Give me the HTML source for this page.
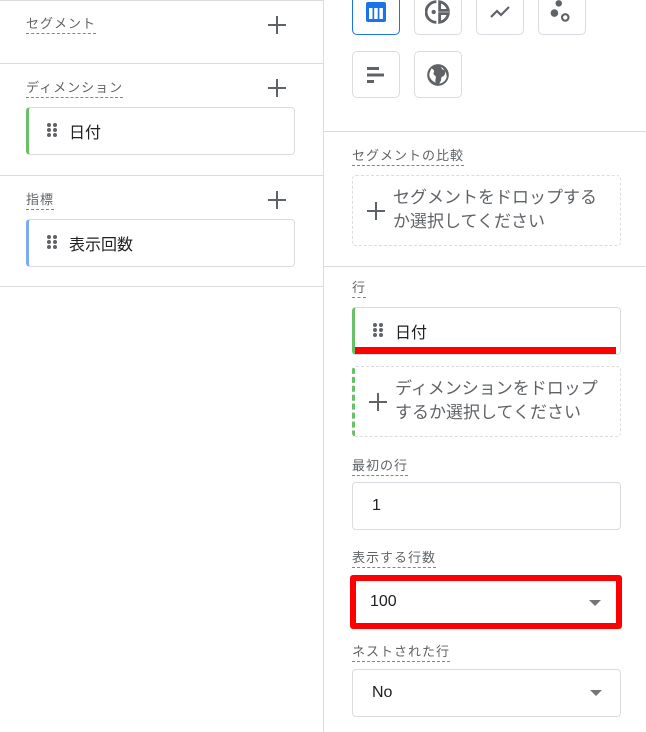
<!DOCTYPE html>
<html><head><meta charset="utf-8"><style>
*{box-sizing:border-box;margin:0;padding:0}
body{width:646px;height:732px;background:#fff;position:relative;overflow:hidden;font-family:"Liberation Sans","Noto Sans CJK JP",sans-serif;color:#3c4043}
.a{position:absolute}
.hr{position:absolute;height:1px;background:#dadce0}
.lbl{position:absolute;font-size:13px;color:#5f6368;border-bottom:1px dashed #80868b;line-height:17px;padding-bottom:1px;letter-spacing:1px}
.plus{position:absolute;width:18px;height:18px}
.plus:before{content:"";position:absolute;left:8px;top:0;width:2px;height:18px;background:#5f6368}
.plus:after{content:"";position:absolute;top:8px;left:0;height:2px;width:18px;background:#5f6368}
.chip{position:absolute;border:1px solid #dadce0;border-radius:4px;font-size:16px;color:#202124}
.dots{position:absolute;width:10px;height:14px}
.dots i{position:absolute;width:4px;height:4px;border-radius:2px;background:#5f6368}
.btn{position:absolute;width:48px;height:47px;border:1px solid #dadce0;border-radius:5px;display:flex;align-items:center;justify-content:center}
.dash{position:absolute;border:1px dashed #dadce0;border-radius:4px;font-size:17px;color:#5f6368;line-height:24px}
.arr{position:absolute;width:0;height:0;border-left:6px solid transparent;border-right:6px solid transparent;border-top:6px solid #757575}
</style></head><body>
<div class="a" style="left:323px;top:0;width:1px;height:732px;background:#dadce0"></div>
<div class="hr" style="left:0;top:0;width:323px"></div>
<div class="hr" style="left:0;top:63px;width:323px"></div>
<div class="hr" style="left:0;top:175px;width:323px"></div>
<div class="hr" style="left:0;top:286px;width:323px"></div>
<div class="hr" style="left:324px;top:131px;width:322px"></div>
<div class="hr" style="left:324px;top:266px;width:322px"></div>

<div class="lbl" style="left:26px;top:15px">セグメント</div>
<div class="plus" style="left:268px;top:16px"></div>
<div class="lbl" style="left:26px;top:79px">ディメンション</div>
<div class="plus" style="left:268px;top:79px"></div>
<div class="chip" style="left:26px;top:107px;width:269px;height:48px;border-left:3px solid #6abf69">
 <div class="dots" style="left:18px;top:15px"><i style="left:0;top:0"></i><i style="left:6px;top:0"></i><i style="left:0;top:5px"></i><i style="left:6px;top:5px"></i><i style="left:0;top:10px"></i><i style="left:6px;top:10px"></i></div>
 <div class="a" style="left:40px;top:11px">日付</div></div>
<div class="lbl" style="left:26px;top:191px">指標</div>
<div class="plus" style="left:268px;top:191px"></div>
<div class="chip" style="left:26px;top:219px;width:269px;height:48px;border-left:3px solid #7baaf7">
 <div class="dots" style="left:18px;top:15px"><i style="left:0;top:0"></i><i style="left:6px;top:0"></i><i style="left:0;top:5px"></i><i style="left:6px;top:5px"></i><i style="left:0;top:10px"></i><i style="left:6px;top:10px"></i></div>
 <div class="a" style="left:40px;top:11px">表示回数</div></div>

<div class="btn" style="left:352px;top:-12px;border-color:#1a73e8"><svg width="24" height="24" viewBox="0 0 24 24"><rect x="2" y="2" width="20" height="20" rx="2" fill="#1a73e8"/><rect x="5" y="8" width="3.5" height="11" fill="#fff"/><rect x="10.2" y="8" width="3.5" height="11" fill="#fff"/><rect x="15.4" y="8" width="3.5" height="11" fill="#fff"/></svg></div>
<div class="btn" style="left:414px;top:-12px"><svg width="26" height="26" viewBox="0 0 24 24" fill="none" stroke="#5f6368" stroke-width="2.6"><path d="M10.5 2.5A9.5 9.5 0 0 0 10.5 21.5"/><path d="M13.5 2.5A9.5 9.5 0 0 1 21.5 10.5H13.5Z" fill="none"/><path d="M13.5 13.5H21.5A9.5 9.5 0 0 1 13.5 21.5Z"/><circle cx="8" cy="12" r="2" fill="#5f6368" stroke="none"/></svg></div>
<div class="btn" style="left:476px;top:-12px"><svg width="24" height="24" viewBox="0 0 24 24" fill="none" stroke="#5f6368" stroke-width="2.2"><path d="M3 17l6-6 4 4 8-8"/></svg></div>
<div class="btn" style="left:538px;top:-12px"><svg width="26" height="26" viewBox="0 0 24 24"><circle cx="9" cy="4" r="3" fill="#5f6368"/><circle cx="5" cy="13" r="3.5" fill="#5f6368"/><circle cx="15" cy="17" r="3" fill="none" stroke="#5f6368" stroke-width="2"/></svg></div>
<div class="btn" style="left:352px;top:51px"><svg width="24" height="24" viewBox="0 0 24 24" fill="#5f6368"><rect x="3" y="4" width="12" height="3"/><rect x="3" y="10.5" width="17" height="3"/><rect x="3" y="17" width="7" height="3"/></svg></div>
<div class="btn" style="left:414px;top:51px"><svg width="26" height="26" viewBox="0 0 24 24"><circle cx="12" cy="12" r="10" fill="#5f6368"/><path d="M6 6c2 1 3 2 2 4s2 2 2 4-1 3 0 5c-3-1-6-4-6-7 0-2 1-4 2-6zM14 4c2 1 1 3 3 3s2 3 1 5c-1 2-3 1-3 3s-1 4-2 5c2 0 6-2 7-6 0-4-2-8-6-10z" fill="#fff"/></svg></div>

<div class="lbl" style="left:352px;top:147px">セグメントの比較</div>
<div class="dash" style="left:352px;top:175px;width:269px;height:71px"><div class="plus" style="left:14px;top:26px"></div><div class="a" style="left:40px;top:10px">セグメントをドロップする<br>か選択してください</div></div>

<div class="lbl" style="left:352px;top:279px">行</div>
<div class="chip" style="left:352px;top:307px;width:269px;height:48px;border-left:3px solid #6abf69">
 <div class="dots" style="left:18px;top:15px"><i style="left:0;top:0"></i><i style="left:6px;top:0"></i><i style="left:0;top:5px"></i><i style="left:6px;top:5px"></i><i style="left:0;top:10px"></i><i style="left:6px;top:10px"></i></div>
 <div class="a" style="left:40px;top:11px">日付</div>
 <div class="a" style="left:0;top:39px;width:261px;height:7px;background:#f00"></div></div>
<div class="dash" style="left:352px;top:366px;width:269px;height:71px;border-left:3px dashed #6abf69"><div class="plus" style="left:14px;top:26px"></div><div class="a" style="left:40px;top:10px">ディメンションをドロップ<br>するか選択してください</div></div>

<div class="lbl" style="left:352px;top:457px">最初の行</div>
<div class="chip" style="left:352px;top:482px;width:269px;height:48px"><div class="a" style="left:19px;top:14px">1</div></div>
<div class="lbl" style="left:352px;top:549px">表示する行数</div>
<div class="a" style="left:350px;top:575px;width:272px;height:54px;border:6px solid #f00;border-radius:3px"><div class="a" style="left:14px;top:12px;font-size:16px;color:#202124">100</div><div class="arr" style="left:233px;top:19px"></div></div>
<div class="lbl" style="left:352px;top:643px">ネストされた行</div>
<div class="chip" style="left:352px;top:669px;width:269px;height:48px"><div class="a" style="left:19px;top:14px">No</div><div class="arr" style="left:237px;top:20px"></div></div>
</body></html>
